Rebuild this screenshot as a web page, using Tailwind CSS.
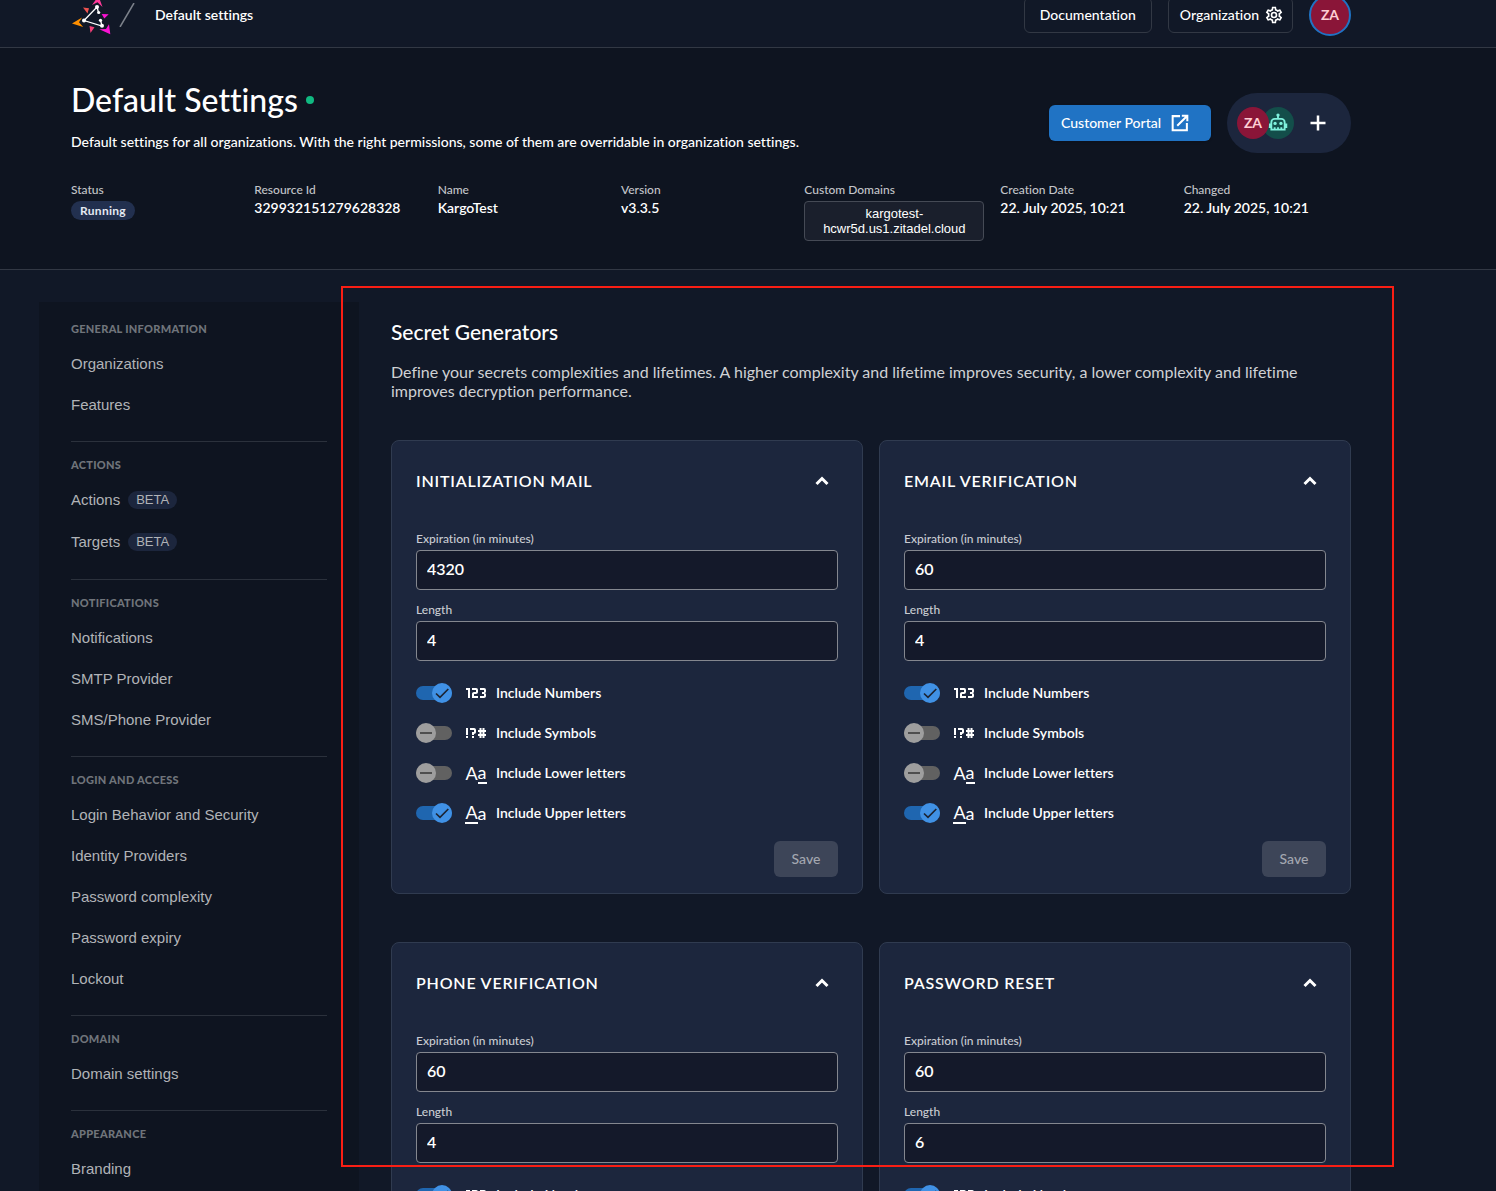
<!DOCTYPE html>
<html lang="en">
<head>
    <meta charset="UTF-8">
    <meta name="viewport" content="width=device-width, initial-scale=1.0">
    <title>Default Settings</title>
    <script src="https://cdn.jsdelivr.net/npm/@tailwindcss/browser@4"></script>
</head>
<body class="bg-[#111827] text-white font-['Lato',sans-serif] [font-variant-ligatures:none] text-sm font-medium h-screen overflow-hidden">

    <!-- Shared icons -->
    <svg class="hidden">
        <symbol id="i-numbers" viewBox="0 0 24 24"><path fill="currentColor" d="M4 17V9H2V7H6V17H4M22 15C22 16.11 21.1 17 20 17H16V15H20V13H18V11H20V9H16V7H20A2 2 0 0 1 22 9V10.5A1.5 1.5 0 0 1 20.5 12A1.5 1.5 0 0 1 22 13.5V15M14 15V17H8V13C8 11.89 8.9 11 10 11H12V9H8V7H12A2 2 0 0 1 14 9V11C14 12.11 13.1 13 12 13H10V15H14Z"/></symbol>
        <symbol id="i-symbols" viewBox="0 0 24 24"><path fill="currentColor" d="M2 7V14H4V7H2M6 7V9H10V11H8V14H10V13C11.11 13 12 12.11 12 11V9C12 7.89 11.11 7 10 7H6M15.5 7V9H14V11H15.5V13H14V15H15.5V17H17.5V15H18.5V17H20.5V15H22V13H20.5V11H22V9H20.5V7H18.5V9H17.5V7H15.5M17.5 11H18.5V13H17.5V11M2 15V17H4V15H2M8 15V17H10V15H8Z"/></symbol>
        <symbol id="i-chevron" viewBox="0 0 24 24"><path fill="none" stroke="currentColor" stroke-width="3" d="M6.5 15 12 9.5 17.500 15"/></symbol>
        <symbol id="i-on" viewBox="0 0 20 20"><circle cx="10" cy="10" r="10" fill="#4091e5"/><path fill="none" stroke="#1c2433" stroke-width="1.700" d="M4 10.500 8 14.300 16.300 6"/></symbol>
        <symbol id="i-off" viewBox="0 0 20 20"><circle cx="10" cy="10" r="10" fill="#9e9e9e"/><path stroke="#424242" stroke-width="1.700" d="M4 10H16"/></symbol>
    </svg>

    <!-- Top bar, partly scrolled away -->
    <header class="-mt-[17px] border-b border-[#323844] pl-[71px] pr-[145px]">
        <div class="h-16 flex items-center justify-between">
            <div class="flex items-center">
                <svg class="w-10 h-10" viewBox="71 -5 40 40">
                    <path fill="#ff8f00" d="M72 23.500 82 17.500 79 22.300 83.200 27Z"/>
                    <path fill="#ff3a9a" d="M98.500-4 92 5 97.500 2.200 102.500 7Z"/>
                    <path fill="#f912d2" d="M110.300 34.300 109 24.300 106 29 99.300 29.300Z"/>
                    <path fill="#ef5350" d="M83 7.500 89 8.300 87.500 13.500Z"/>
                    <path fill="#f912d2" d="M101.700 14 108.700 14.300 104.300 18.500Z"/>
                    <path fill="#f5407a" d="M89.500 26 94.500 27.300 90.500 33Z"/>
                    <path fill="none" stroke="#fff" stroke-width="1.300" d="M98.500 12.500 97 7 84 20.500 102 26 100.500 20"/>
                    <g fill="#fff"><circle cx="97" cy="7" r="2"/><circle cx="98.700" cy="12.500" r="1.600"/><circle cx="100.500" cy="20.300" r="1.600"/><circle cx="102" cy="25.700" r="2"/><circle cx="84" cy="20.500" r="2"/></g>
                </svg>
                <svg class="w-4 h-6 ml-2" viewBox="0 0 16 24"><path stroke="#7d828b" stroke-width="1.500" d="M1 24 15 0"/></svg>
                <span class="ml-5 font-semibold">Default settings</span>
            </div>
            <nav class="flex items-center gap-4">
                <a href="#" class="h-9 px-[15px] flex items-center rounded-md border border-[#323844]">Documentation</a>
                <button class="h-9 pl-[11px] pr-2 flex items-center gap-[5px] rounded-md border border-[#323844]">
                    Organization
                    <svg class="w-5 h-5" viewBox="0 0 24 24"><path fill="currentColor" d="M12 8A4 4 0 0 1 16 12 4 4 0 0 1 12 16 4 4 0 0 1 8 12 4 4 0 0 1 12 8M12 10A2 2 0 0 0 10 12 2 2 0 0 0 12 14 2 2 0 0 0 14 12 2 2 0 0 0 12 10M10 22C9.750 22 9.540 21.820 9.500 21.580L9.130 18.930C8.500 18.680 7.960 18.340 7.440 17.940L4.950 18.950C4.730 19.030 4.460 18.950 4.340 18.730L2.340 15.270C2.210 15.050 2.270 14.780 2.460 14.630L4.570 12.970 4.500 12 4.570 11 2.460 9.370C2.270 9.220 2.210 8.950 2.340 8.730L4.340 5.270C4.460 5.050 4.730 4.960 4.950 5.050L7.440 6.050C7.960 5.660 8.500 5.320 9.130 5.070L9.500 2.420C9.540 2.180 9.750 2 10 2H14C14.250 2 14.460 2.180 14.500 2.420L14.870 5.070C15.500 5.320 16.040 5.660 16.560 6.050L19.050 5.050C19.270 4.960 19.540 5.050 19.660 5.270L21.660 8.730C21.790 8.950 21.730 9.220 21.540 9.370L19.430 11 19.500 12 19.430 13 21.540 14.630C21.730 14.780 21.790 15.050 21.660 15.270L19.660 18.730C19.540 18.950 19.270 19.040 19.050 18.950L16.560 17.950C16.040 18.340 15.500 18.680 14.870 18.930L14.500 21.580C14.460 21.820 14.250 22 14 22H10M11.250 4 10.880 6.610C9.680 6.860 8.620 7.500 7.850 8.390L5.440 7.350 4.690 8.650 6.800 10.200C6.400 11.370 6.400 12.640 6.800 13.800L4.680 15.360 5.430 16.660 7.860 15.620C8.630 16.500 9.680 17.140 10.870 17.380L11.240 20H12.760L13.130 17.390C14.320 17.140 15.370 16.500 16.140 15.620L18.570 16.660 19.320 15.360 17.200 13.810C17.600 12.640 17.600 11.370 17.200 10.200L19.310 8.650 18.560 7.350 16.150 8.390C15.380 7.500 14.320 6.860 13.120 6.620L12.750 4H11.250Z"/></svg>
                </button>
                <button class="w-[42px] h-[42px] rounded-full border-2 border-[#2073c4] bg-[#8a1538] text-[#fecdd3] font-bold">ZA</button>
            </nav>
        </div>
    </header>

    <!-- Instance summary -->
    <section class="bg-[#0e1420] border-b border-[#323844] pl-[71px] pr-[145px] pt-8 pb-7">
        <div class="flex items-end justify-between">
            <div>
                <div class="flex items-center gap-2">
                    <h1 class="text-[32px] leading-10 font-medium">Default Settings</h1>
                    <span class="w-2 h-2 rounded-full bg-[#10b981]"></span>
                </div>
                <p class="mt-3 mb-0.5 leading-[19px]">Default settings for all organizations. With the right permissions, some of them are overridable in organization settings.</p>
            </div>
            <div class="flex items-center gap-4">
                <a href="#" class="h-9 w-[162px] pl-3 flex items-center gap-2 rounded-md bg-[#2073c4] shadow">
                    Customer Portal
                    <svg class="w-[22px] h-[22px]" viewBox="0 0 24 24"><path fill="none" stroke="currentColor" stroke-width="2.200" d="M12 4.500H4V20H19.500V12M14 4H20V10M20 4 9 15"/></svg>
                </a>
                <div class="h-[60px] w-[124px] pl-[10px] flex items-center rounded-full bg-[#1c263d]">
                    <span class="z-10 w-8 h-8 flex items-center justify-center rounded-full bg-[#8a1538] text-[#fecdd3] font-bold">ZA</span>
                    <span class="-ml-[7px] w-8 h-8 flex items-center justify-center rounded-full bg-[#134e4a] text-[#7ff0dc]">
                        <svg class="w-5 h-5" viewBox="0 0 24 24"><path fill="none" stroke="currentColor" stroke-width="2.200" d="M12 3V7M8 7H16A4 4 0 0 1 20 11V20H4V11A4 4 0 0 1 8 7ZM2 12.500V18M22 12.500V18M8 20V17M12 20V17M16 20V17"/><circle cx="12" cy="2.500" r="2" fill="currentColor"/><circle cx="8.500" cy="12.500" r="2" fill="currentColor"/><circle cx="15.500" cy="12.500" r="2" fill="currentColor"/></svg>
                    </span>
                    <button class="ml-3 w-6 h-6" aria-label="Add">
                        <svg class="w-6 h-6" viewBox="0 0 24 24"><path stroke="currentColor" stroke-width="2.500" d="M12 4.500V19.500M4.500 12H19.500"/></svg>
                    </button>
                </div>
            </div>
        </div>

        <dl class="mt-[29px] flex gap-4 leading-5">
            <div class="flex-1">
                <dt class="text-xs text-[#c3c5c9]">Status</dt>
                <dd class="mt-[3px] h-[19px] w-16 flex items-center justify-center rounded-full bg-[#22304f] text-xs font-bold tracking-wide text-[#e4e9f2]">Running</dd>
            </div>
            <div class="flex-1">
                <dt class="text-xs text-[#c3c5c9]">Resource Id</dt>
                <dd class="font-semibold">329932151279628328</dd>
            </div>
            <div class="flex-1">
                <dt class="text-xs text-[#c3c5c9]">Name</dt>
                <dd class="font-semibold">KargoTest</dd>
            </div>
            <div class="flex-1">
                <dt class="text-xs text-[#c3c5c9]">Version</dt>
                <dd class="font-semibold">v3.3.5</dd>
            </div>
            <div class="w-[180px]">
                <dt class="text-xs text-[#c3c5c9]">Custom Domains</dt>
                <dd><button class="mt-[3px] h-10 w-full rounded border border-[#454a55] bg-[#1a1f2c] font-['Liberation_Sans',sans-serif] text-[13px] leading-[15px]">kargotest-<br>hcwr5d.us1.zitadel.cloud</button></dd>
            </div>
            <div class="flex-1">
                <dt class="text-xs text-[#c3c5c9]">Creation Date</dt>
                <dd class="font-semibold">22. July 2025, 10:21</dd>
            </div>
            <div class="flex-1">
                <dt class="text-xs text-[#c3c5c9]">Changed</dt>
                <dd class="font-semibold">22. July 2025, 10:21</dd>
            </div>
        </dl>
    </section>

    <div class="relative flex pt-8 pl-[39px] pr-[145px]">

        <!-- Settings navigation -->
        <aside id="sidenav" class="w-80 shrink-0 px-8 pt-1 bg-[#0e1420]"></aside>

        <main class="flex-1 pl-8 pt-4">
            <h2 class="text-[21px] leading-7 font-medium">Secret Generators</h2>
            <p class="mt-4 text-base leading-[19px] font-normal text-[#cfd1d4]">Define your secrets complexities and lifetimes. A higher complexity and lifetime improves security, a lower complexity and lifetime improves decryption performance.</p>
            <div id="generators" class="mt-10 grid grid-cols-2 gap-x-4 gap-y-12"></div>
        </main>

        <!-- Highlight frame -->
        <div class="absolute top-4 left-[341px] right-[102px] h-[881px] border-2 border-[#fa1e14] pointer-events-none"></div>
    </div>

    <script>
        const groups = [
            { title: 'General Information', links: ['Organizations', 'Features'] },
            { title: 'Actions', links: ['Actions', 'Targets'], beta: true },
            { title: 'Notifications', links: ['Notifications', 'SMTP Provider', 'SMS/Phone Provider'] },
            { title: 'Login and Access', links: ['Login Behavior and Security', 'Identity Providers', 'Password complexity', 'Password expiry', 'Lockout'] },
            { title: 'Domain', links: ['Domain settings'] },
            { title: 'Appearance', links: ['Branding'] }
        ];

        const generators = [
            { id: 'init', title: 'Initialization Mail', expiration: 4320, length: 4 },
            { id: 'email', title: 'Email Verification', expiration: 60, length: 4 },
            { id: 'phone', title: 'Phone Verification', expiration: 60, length: 4 },
            { id: 'reset', title: 'Password Reset', expiration: 60, length: 6 }
        ];

        const options = [
            { label: 'Include Numbers', on: true, icon: '<svg class="w-6 h-6"><use href="#i-numbers"/></svg>' },
            { label: 'Include Symbols', on: false, icon: '<svg class="w-6 h-6"><use href="#i-symbols"/></svg>' },
            { label: 'Include Lower letters', on: false, icon: '<span>A</span><span class="border-b-2">a</span>' },
            { label: 'Include Upper letters', on: true, icon: '<span class="border-b-2">A</span><span>a</span>' }
        ];

        document.getElementById('sidenav').innerHTML = groups.map((group, i) => `
            <section class="pt-[15px] pb-4 ${i ? 'border-t border-[#2b313c]' : ''}">
                <h3 class="mb-1.5 text-[11px] leading-4 font-black uppercase tracking-wide text-[#70747b]">${group.title}</h3>
                ${group.links.map(link => `
                    <a href="#" class="${group.beta ? 'h-[42px]' : 'h-[41px]'} flex items-center gap-2 font-['Liberation_Sans',sans-serif] text-[15px] text-[#b1b3b7]">
                        ${link}
                        ${group.beta ? '<span class="px-2 rounded-full bg-[#1c263d] text-[13px] leading-[18px]">BETA</span>' : ''}
                    </a>`).join('')}
            </section>`).join('');

        const field = (id, label, value) => `
            <div>
                <label for="${id}" class="block mb-[3px] text-xs text-[#c9ccd2]">${label}</label>
                <input id="${id}" type="text" value="${value}" class="block w-full h-10 px-[10px] pb-[3px] rounded border border-[#84878f] bg-[#14192a] text-base font-semibold">
            </div>`;

        const toggle = option => `
            <label class="h-10 flex items-center font-semibold">
                <span class="relative flex items-center w-9 h-5">
                    <input type="checkbox" ${option.on ? 'checked' : ''} class="appearance-none w-9 h-[14px] rounded-full bg-[#616161] checked:bg-[#1f66b0]">
                    <svg class="absolute top-0 w-5 h-5 ${option.on ? 'right-0' : 'left-0'}"><use href="${option.on ? '#i-on' : '#i-off'}"/></svg>
                </span>
                <span class="ml-3 mr-2 w-6 h-6 flex items-center justify-center font-['Lato',sans-serif] text-lg leading-[19px] font-normal" aria-hidden="true">${option.icon}</span>
                ${option.label}
            </label>`;

        document.getElementById('generators').innerHTML = generators.map(g => `
            <form class="px-6 pb-4 rounded-lg border border-[#303b50] bg-[#1c263d]">
                <div class="h-20 flex items-center justify-between">
                    <h3 class="text-base font-semibold uppercase tracking-wider">${g.title}</h3>
                    <button type="button" class="mr-1 w-6 h-6" aria-label="Collapse"><svg class="w-6 h-6"><use href="#i-chevron"/></svg></button>
                </div>
                <div class="mt-[10px] flex flex-col gap-3">
                    ${field(g.id + '-expiration', 'Expiration (in minutes)', g.expiration)}
                    ${field(g.id + '-length', 'Length', g.length)}
                </div>
                <div class="mt-3">${options.map(toggle).join('')}</div>
                <div class="mt-2 flex justify-end">
                    <button type="button" disabled class="w-16 h-9 rounded-md bg-[#3d4558] text-[#a3a7b0]">Save</button>
                </div>
            </form>`).join('');
    </script>
</body>
</html>
